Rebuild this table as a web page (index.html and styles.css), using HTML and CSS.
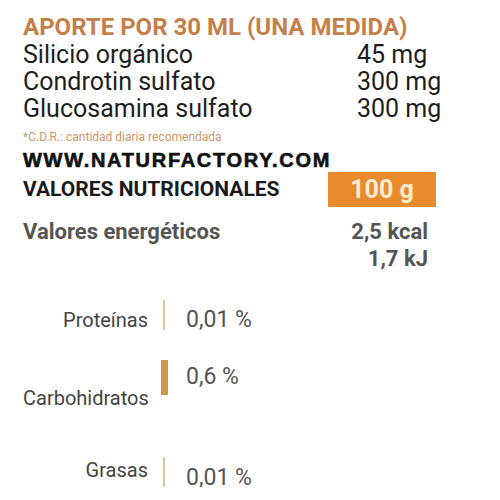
FILE: index.html
```html
<!DOCTYPE html>
<html lang="es">
  <head>
    <meta charset="UTF-8" />
    <title>Aporte</title>
    <link rel="stylesheet" href="styles.css">
  </head>
  <body>
    <div class="label">
      <h1 class="title">APORTE POR 30 ML (UNA MEDIDA)</h1>
      <div class="dose">
        <span>Silicio orgánico</span><span>45 mg</span>
        <span>Condrotin sulfato</span><span>300 mg</span>
        <span>Glucosamina sulfato</span><span>300 mg</span>
      </div>
      <p class="note">*C.D.R.: cantidad diaria recomendada</p>
      <p class="web">WWW.NATURFACTORY.COM</p>
      <div class="head">
        <span>VALORES NUTRICIONALES</span>
        <span class="badge">100 g</span>
      </div>
      <div class="energy">
        <span>Valores energéticos</span>
        <span class="vals">2,5 kcal<br>1,7 kJ</span>
      </div>
      <div class="chart">
        <div class="row r1">
          <span class="name">Proteínas</span>
          <span class="bar" style="height:30px"></span>
          <span class="pct">0,01 %</span>
        </div>
        <div class="row r2">
          <span class="name">Carbohidratos</span>
          <span class="bar thick" style="height:35px"></span>
          <span class="pct">0,6 %</span>
        </div>
        <div class="row r3">
          <span class="name">Grasas</span>
          <span class="bar" style="height:30px"></span>
          <span class="pct">0,01 %</span>
        </div>
      </div>
    </div>
  </body>
</html>
```

FILE: styles.css
```css
body {
  margin: 0;
  background: #fff;
  font-family: Roboto, "Liberation Sans", sans-serif;
  color: #222;
}

.label {
  width: 413px;
  padding: 13px 0 0 23px;
}

.title {
  margin: 0;
  font-size: 24px;
  line-height: 28px;
  font-weight: bold;
  color: #c4804a;
}

.dose {
  display: grid;
  grid-template-columns: 334px auto;
  font-size: 25px;
  line-height: 27px;
  white-space: nowrap;
  color: #1e1e1e;
}

.note {
  margin: 8px 0 0;
  font-size: 12px;
  line-height: 14px;
  color: #c9966a;
}

.web {
  margin: 5px 0 0;
  font-family: "Liberation Sans", sans-serif;
  font-weight: bold;
  font-size: 20px;
  line-height: 22px;
  letter-spacing: 1.7px;
  -webkit-text-stroke: 0.6px #111;
  color: #111;
}

.head {
  display: flex;
  align-items: center;
  margin-top: 1px;
  font-size: 21px;
  line-height: 35px;
  font-weight: bold;
  color: #1a1a1a;
}

.head .badge {
  margin-left: auto;
  width: 108px;
  height: 35px;
  text-align: center;
  background: #e98b2c;
  color: #fdecd2;
  font-size: 25px;
}

.energy {
  display: flex;
  margin-top: 11px;
  font-size: 22px;
  line-height: 27px;
  font-weight: bold;
  color: #555;
}

.energy .vals {
  margin-left: auto;
  margin-right: 8px;
  text-align: right;
}

.chart {
  margin-top: 28px;
}

.row {
  display: grid;
  grid-template-columns: 125px 32px auto;
  align-items: end;
  font-size: 20px;
  line-height: 24px;
  white-space: nowrap;
  color: #444;
}

.row .name {
  text-align: right;
}

.row .bar {
  justify-self: center;
  width: 2px;
  background: #d9c597;
}

.row .bar.thick {
  width: 7px;
  background: #d0964f;
}

.row .pct {
  padding-left: 6px;
  font-size: 23px;
  color: #555;
}

.r1 .name,
.r1 .pct {
  margin-bottom: -2px;
}

.r2 {
  margin-top: 30px;
  align-items: start;
}

.r2 .name {
  margin-top: 26px;
}

.r2 .pct {
  margin-top: 5px;
}

.r3 {
  margin-top: 47px;
}

.r3 .name {
  margin-bottom: 5px;
}

.r3 .pct {
  margin-bottom: -3px;
}
```
